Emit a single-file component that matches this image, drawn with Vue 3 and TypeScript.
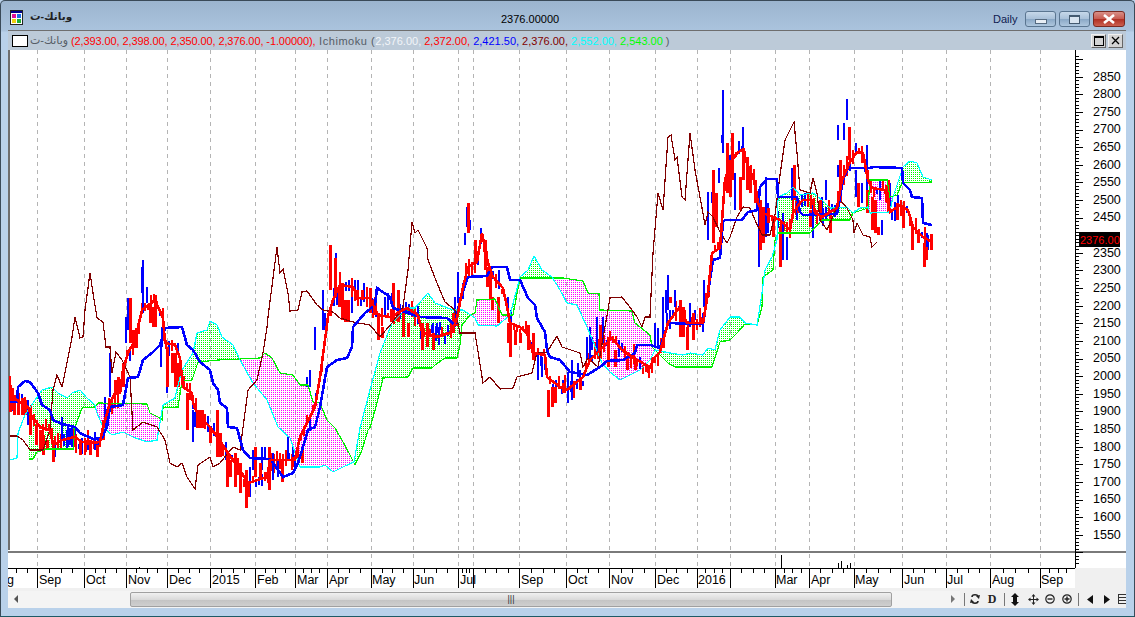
<script setup lang="ts">
type P = number[]
const pts = (a: P[]) => a.map((p) => p.join(',')).join(' ')

const chikou: P[] = [[10,436],[17,436],[23,440],[30,450],[38,450],[43,450],[50,430],[53,390],[57,375],[62,387],[67,363],[72,337],[75,317],[80,338],[83,337],[85,310],[90,273],[93,293],[97,318],[103,322],[106,347],[110,347],[112,373],[116,352],[122,360],[130,377],[133,430],[143,422],[157,427],[165,440],[170,463],[177,467],[182,463],[187,477],[195,489],[198,465],[210,457],[213,467],[220,463],[233,447],[240,450],[248,390],[257,380],[263,353],[267,327],[268,317],[277,247],[280,273],[283,269],[288,293],[290,311],[298,310],[302,292],[307,291],[317,305],[323,310],[333,312],[340,318],[353,322],[370,325],[380,337],[392,323],[403,307],[408,270],[412,222],[415,233],[418,230],[427,248],[428,260],[437,283],[445,302],[455,310],[460,333],[475,333],[483,383],[490,377],[500,389],[513,388],[517,377],[532,373],[537,353],[547,352],[557,336],[562,347],[580,353],[583,367],[588,358],[598,367],[610,298],[622,297],[632,310],[637,317],[642,327],[645,317],[650,317],[653,253],[658,193],[663,210],[668,137],[671,135],[675,160],[677,157],[682,197],[685,200],[690,133],[695,170],[702,208],[705,225],[708,212],[713,217],[720,232],[727,243],[730,237],[737,217],[743,207],[750,208],[755,220],[762,235],[770,235],[775,215],[780,175],[785,140],[790,130],[794,122],[797,153],[800,190],[810,193],[813,178],[817,193],[820,220],[827,230],[840,200],[847,208],[853,220],[854,233],[857,223],[863,235],[870,237],[872,247],[877,242]]

const senkouA: P[] = [[10,460],[17,458],[18,433],[25,415],[33,403],[42,390],[52,387],[58,393],[67,398],[72,393],[80,390],[87,398],[95,405],[97,413],[103,427],[112,435],[123,432],[133,437],[147,442],[157,440],[163,405],[175,398],[182,370],[193,353],[197,333],[207,330],[210,321],[217,325],[222,337],[233,345],[240,360],[253,383],[267,400],[278,427],[290,438],[300,467],[320,467],[325,465],[333,472],[345,466],[354,462],[360,428],[370,390],[380,353],[392,323],[407,308],[415,308],[428,293],[435,303],[453,310],[463,310],[475,318],[478,325],[497,326],[510,315],[520,277],[528,270],[534,256],[542,270],[552,277],[560,290],[567,303],[577,305],[587,327],[602,363],[610,372],[620,380],[640,370],[650,360],[655,350],[670,353],[683,355],[690,353],[703,355],[708,348],[715,350],[720,330],[730,317],[740,317],[745,323],[757,325],[762,293],[765,270],[772,257],[777,240],[778,197],[787,193],[793,187],[800,195],[813,193],[822,200],[830,208],[847,207],[853,213],[860,208],[868,207],[870,213],[890,212],[893,197],[903,167],[910,161],[917,163],[923,177],[932,180]]

const senkouB: P[] = [[29,459],[33,459],[37,452],[47,449],[73,449],[75,427],[82,408],[95,407],[98,403],[147,404],[150,413],[158,417],[162,420],[163,408],[178,407],[182,381],[192,380],[198,362],[218,360],[260,358],[265,353],[272,358],[280,373],[293,375],[300,385],[308,385],[313,402],[320,403],[327,420],[335,428],[342,440],[350,455],[355,465],[362,450],[368,430],[370,428],[377,403],[383,378],[408,377],[413,368],[432,368],[435,365],[445,358],[457,358],[460,345],[462,325],[470,315],[475,313],[477,300],[495,299],[502,315],[513,315],[520,278],[563,278],[583,281],[588,293],[599,294],[600,310],[632,311],[635,323],[650,335],[652,347],[668,363],[675,367],[712,367],[720,342],[730,340],[737,333],[745,324],[757,325],[762,307],[763,277],[773,270],[775,240],[778,233],[810,233],[822,220],[850,220],[853,213],[868,208],[870,180],[887,180],[890,197],[897,195],[902,183],[932,182]]

const kijun: P[] = [[10,402],[17,402],[18,387],[25,381],[30,382],[38,393],[42,405],[50,410],[53,420],[62,424],[75,427],[80,433],[93,439],[102,438],[107,427],[110,407],[123,405],[128,378],[138,377],[143,360],[153,352],[160,345],[165,328],[182,327],[187,345],[193,350],[200,362],[210,370],[213,383],[218,390],[220,403],[227,408],[228,427],[237,428],[243,450],[250,458],[270,459],[273,463],[283,477],[293,473],[298,463],[303,447],[308,430],[315,427],[320,407],[327,367],[337,360],[347,358],[352,347],[353,327],[365,313],[375,305],[377,288],[390,297],[393,308],[420,317],[447,318],[455,325],[460,300],[468,277],[487,276],[492,267],[507,267],[510,280],[520,280],[528,298],[535,305],[537,318],[545,332],[547,350],[550,357],[560,360],[570,372],[587,375],[600,367],[607,361],[623,360],[635,353],[637,345],[650,345],[660,348],[668,323],[703,324],[708,293],[713,260],[720,258],[723,222],[725,220],[742,220],[748,212],[758,210],[760,187],[767,179],[777,179],[778,197],[797,197],[800,212],[803,215],[837,214],[843,180],[848,168],[870,168],[873,167],[902,168],[903,183],[910,190],[912,197],[922,198],[923,223],[932,225]]

const tenkan: P[] = [[10,385],[13,397],[20,402],[28,407],[32,417],[40,427],[50,430],[53,445],[62,440],[75,437],[82,442],[90,443],[100,442],[103,427],[110,403],[115,393],[120,393],[123,370],[128,353],[135,340],[142,310],[155,300],[163,318],[165,343],[175,345],[180,358],[183,387],[192,393],[193,403],[198,415],[210,427],[218,438],[228,453],[238,467],[248,483],[267,477],[270,460],[295,460],[300,437],[315,407],[320,377],[325,340],[328,317],[333,300],[340,285],[353,287],[358,298],[370,298],[378,315],[390,317],[407,308],[418,315],[422,332],[437,337],[452,332],[457,318],[463,287],[468,267],[477,262],[482,233],[488,263],[493,277],[503,288],[507,307],[510,323],[520,327],[527,333],[533,353],[545,355],[547,377],[560,387],[567,390],[583,377],[590,360],[603,347],[612,338],[622,350],[637,360],[650,367],[655,357],[660,352],[668,323],[680,307],[687,323],[703,323],[708,293],[712,253],[720,248],[725,180],[731,162],[737,153],[742,150],[747,163],[755,183],[758,203],[763,213],[773,217],[780,220],[790,230],[793,213],[800,203],[803,200],[813,200],[815,213],[822,217],[837,208],[842,180],[850,162],[857,152],[863,153],[868,180],[872,188],[885,190],[890,212],[900,205],[908,210],[913,227],[923,237],[932,242]]

const redBars: P[] = [[10,385,412],[12,388,410],[14,395,415],[18,400,415],[22,398,415],[25,400,415],[30,415,435],[36,425,445],[40,430,450],[43,435,455],[47,440,450],[53,440,462],[75,435,447],[80,440,455],[85,440,452],[90,440,455],[97,445,457],[103,420,440],[115,380,395],[118,377,393],[123,363,387],[130,298,343],[133,330,348],[136,333,348],[150,303,323],[153,307,327],[155,295,327],[167,347,387],[172,353,373],[175,353,387],[178,363,387],[187,393,430],[197,410,428],[200,410,428],[202,410,428],[210,427,443],[217,410,457],[220,433,457],[227,453,487],[230,460,477],[235,453,487],[240,463,493],[246,470,508],[248,483,497],[255,447,477],[260,463,480],[269,447,490],[282,460,482],[292,457,467],[302,450,463],[330,245,290],[335,258,297],[339,290,307],[342,283,320],[345,300,322],[348,300,322],[357,290,300],[362,290,300],[370,288,313],[375,297,315],[378,313,340],[382,327,338],[393,283,323],[398,290,322],[403,313,337],[408,323,337],[422,323,350],[427,323,347],[433,333,350],[453,313,327],[468,203,233],[475,240,257],[485,240,270],[487,267,287],[490,273,300],[492,297,310],[498,297,323],[508,323,343],[510,323,357],[515,330,345],[520,333,343],[528,325,350],[533,333,360],[548,390,417],[552,387,407],[555,387,403],[563,383,393],[580,380,390],[600,325,355],[608,337,367],[615,350,367],[627,357,370],[635,360,370],[648,367,373],[670,297,303],[680,300,337],[683,307,337],[687,327,350],[693,313,340],[700,317,323],[713,170,243],[716,193,227],[727,143,193],[730,160,197],[732,133,180],[740,177,210],[743,148,180],[747,157,190],[750,167,193],[755,180,203],[760,200,250],[763,207,243],[768,208,223],[773,217,237],[780,227,267],[794,165,200],[798,200,213],[810,210,227],[820,200,220],[830,210,233],[840,160,203],[849,127,160],[858,183,207],[867,190,213],[872,197,230],[875,200,233],[878,227,235],[888,180,213],[897,203,220],[903,207,228],[912,227,250],[918,233,243],[924,243,267],[926,247,260],[931,234,250]]

const blueBars: P[] = [[18,395,415],[28,400,425],[55,443,457],[62,417,440],[68,427,447],[72,427,447],[75,430,443],[88,445,450],[95,432,450],[98,440,453],[105,397,430],[110,353,397],[126,317,343],[128,298,330],[142,267,293],[143,260,313],[147,287,303],[161,345,367],[162,327,347],[167,353,393],[188,410,430],[193,410,442],[195,412,427],[226,442,460],[250,467,497],[253,450,470],[262,447,470],[265,447,460],[273,453,480],[278,460,477],[288,437,460],[293,447,463],[307,377,387],[310,370,387],[315,327,350],[323,290,330],[325,313,330],[336,253,290],[352,297,313],[355,280,293],[358,280,290],[372,298,313],[385,297,317],[388,293,310],[392,293,303],[432,325,333],[437,323,333],[440,322,330],[455,297,327],[458,272,303],[467,207,227],[470,220,230],[465,233,245],[538,353,380],[542,357,377],[545,363,370],[563,380,390],[568,372,403],[572,360,400],[578,363,377],[587,337,360],[590,327,360],[592,337,350],[597,317,353],[603,317,343],[655,323,347],[658,328,347],[663,297,340],[666,290,313],[668,275,310],[675,290,307],[690,303,327],[695,310,320],[704,280,307],[708,192,240],[712,192,203],[719,168,183],[722,135,143],[723,90,153],[735,173,210],[740,195,200],[743,127,163],[759,190,267],[766,177,237],[768,203,233],[783,213,260],[787,237,260],[792,168,200],[797,203,220],[813,203,238],[822,197,220],[826,180,200],[838,125,140],[838,165,177],[844,123,140],[847,99,120],[856,170,197],[862,183,203],[867,145,213],[882,220,235],[890,183,210],[927,233,260]]

const interp = (s: P[], x: number): number | null => {
  if (x < s[0][0] || x > s[s.length - 1][0]) return null
  for (let i = 1; i < s.length; i++) {
    if (x <= s[i][0]) {
      const [x0, y0] = s[i - 1]
      const [x1, y1] = s[i]
      return x1 === x0 ? y1 : y0 + ((y1 - y0) * (x - x0)) / (x1 - x0)
    }
  }
  return null
}

let seed = 20160
const rnd = () => {
  seed = (seed * 1103515 + 12345) % 2147483
  return seed / 2147483
}
let noiseRed = ''
let noiseBlue = ''
for (let x = 10; x <= 932; x += 3) {
  const c = interp(tenkan, x)
  if (c === null) continue
  const mid = c + (rnd() - 0.45) * 12
  const half = 2 + rnd() * 8
  const seg = `M${x} ${Math.round(mid - half)}V${Math.round(mid + half)}`
  if (rnd() < 0.3) noiseBlue += seg
  else noiseRed += seg
}
const barPath = (a: P[]) => a.map((b) => `M${b[0]} ${b[1]}V${b[2]}`).join('')
const redPath = barPath(redBars)
const bluePath = barPath(blueBars)

let up = ''
let down = ''
for (let x = 29; x <= 932; x += 2) {
  const a = interp(senkouA, x)
  const b = interp(senkouB, x)
  if (a === null || b === null) continue
  const t = Math.ceil(Math.min(a, b) / 2) * 2
  const h = Math.max(a, b)
  let seg = ''
  for (let y = t; y < h; y += 2) seg += `M${x} ${y}h1v1h-1z`
  if (a < b) up += seg
  else down += seg
}

const grid = [37, 84, 126, 167, 210, 255, 295, 327, 371, 413, 458, 473, 519, 566, 609, 655, 697, 730, 775, 809, 854, 902, 946, 990, 1040]
const gridPath = grid.map((x) => `M${x + 0.5} 50V568`).join('')
const majorPath = grid.map((x) => `M${x + 0.5} 568V588`).join('')
let minorPath = ''
const allX = [-5, ...grid, 1075]
for (let i = 1; i < allX.length; i++) {
  const w = allX[i] - allX[i - 1]
  for (let k = 1; k < 4; k++) {
    const x = Math.round(allX[i - 1] + (w * k) / 4)
    if (x > 9 && x < 1075) minorPath += `M${x + 0.5} 568v5`
  }
}
const months = [
  { x: 39, t: 'Sep' }, { x: 86, t: 'Oct' }, { x: 128, t: 'Nov' }, { x: 169, t: 'Dec' },
  { x: 212, t: '2015' }, { x: 257, t: 'Feb' }, { x: 297, t: 'Mar' }, { x: 329, t: 'Apr' },
  { x: 372, t: 'May' }, { x: 414, t: 'Jun' }, { x: 460, t: 'Jul' }, { x: 521, t: 'Sep' },
  { x: 568, t: 'Oct' }, { x: 611, t: 'Nov' }, { x: 657, t: 'Dec' }, { x: 698, t: '2016' },
  { x: 776, t: 'Mar' }, { x: 811, t: 'Apr' }, { x: 855, t: 'May' }, { x: 904, t: 'Jun' },
  { x: 947, t: 'Jul' }, { x: 992, t: 'Aug' }, { x: 1041, t: 'Sep' },
]
const prices: { y: number; t: string }[] = []
for (let p = 2850, i = 0; p >= 1550; p -= 50, i++) {
  if (p !== 2400) prices.push({ y: 76 + i * 17.62, t: String(p) })
}
let axisTicks = ''
for (let y = 55.5; y < 566; y += 3.524) {
  const long = Math.abs((y - 76 + 17.62 * 40) % 17.62) < 1.5
  axisTicks += `M1075 ${Math.round(y) + 0.5}h${long ? 8 : 4}`
}
</script>

<template>
  <div class="win">
    <div class="title">
      <svg class="app" width="13" height="15" viewBox="0 0 13 15">
        <rect x="0.5" y="0.5" width="12" height="14" fill="#fff" stroke="#222" />
        <rect x="1" y="1" width="11" height="2" fill="#00008b" />
        <rect x="2" y="4" width="4" height="4" fill="#e0109a" />
        <rect x="7" y="4" width="4" height="4" fill="#1a6ce8" />
        <rect x="2" y="9" width="4" height="4" fill="#f0d010" />
        <rect x="7" y="9" width="4" height="4" fill="#20b030" />
      </svg>
      <span class="name" dir="rtl">وبانك-ت</span>
      <span class="center">2376.00000</span>
      <span class="daily">Daily</span>
      <div class="btns">
        <div class="btn"><i class="dash"></i></div>
        <div class="btn"><i class="box"></i></div>
        <div class="btn close">
          <svg width="14" height="10" viewBox="0 0 14 10"><path d="M2 1l10 8M12 1L2 9" stroke="#fff" stroke-width="2.6" /></svg>
        </div>
      </div>
    </div>
    <div class="client">
      <div class="head">
        <span class="swatch"></span>
        <span class="gr" dir="rtl">وبانك-ت</span>
        <span class="r tight">&nbsp;(2,393.00, 2,398.00, 2,350.00, 2,376.00, -1.00000),</span>
        <span class="gr wide">&nbsp;Ichimoku (</span><span class="w">2,376.00,</span>
        <span class="r">&nbsp;2,372.00,</span>
        <span class="b">&nbsp;2,421.50,</span>
        <span class="m">&nbsp;2,376.00,</span>
        <span class="c">&nbsp;2,552.00,</span>
        <span class="g">&nbsp;2,543.00</span>
        <span class="gr">&nbsp;)</span>
        <span class="spring"></span>
        <span class="mini"><i></i></span>
        <span class="mini x">
          <svg width="9" height="9" viewBox="0 0 9 9"><path d="M1 1l7 7M8 1L1 8" stroke="#000" stroke-width="1.3" /></svg>
        </span>
      </div>
      <svg class="plot" width="1118" height="540" viewBox="8 50 1118 540" shape-rendering="crispEdges">
        <rect x="8" y="50" width="1118" height="540" fill="#fff" />
        <rect x="1075" y="568" width="51" height="22" fill="#f0f0f0" />
        <rect x="8" y="588" width="1068" height="2" fill="#f0f0f0" />
        <rect x="8" y="50" width="2" height="500" fill="#6e6e6e" />
        <path :d="gridPath" stroke="#b4b4b4" stroke-dasharray="4 4" fill="none" />
        <path :d="up" fill="#00ff00" />
        <path :d="down" fill="#ff00ff" />
        <path :d="noiseBlue" stroke="#0000ff" stroke-width="2" fill="none" />
        <path :d="noiseRed" stroke="#ff0000" stroke-width="2" fill="none" />
        <path :d="bluePath" stroke="#0000ff" stroke-width="2" fill="none" />
        <path :d="redPath" stroke="#ff0000" stroke-width="3" fill="none" />
        <polyline :points="pts(senkouB)" fill="none" stroke="#00ee00" stroke-width="1.2" />
        <polyline :points="pts(senkouA)" fill="none" stroke="#00ffff" stroke-width="1.2" />
        <polyline :points="pts(chikou)" fill="none" stroke="#800000" stroke-width="1.2" />
        <polyline :points="pts(kijun)" fill="none" stroke="#0000ff" stroke-width="2.6" />
        <polyline :points="pts(tenkan)" fill="none" stroke="#ff0000" stroke-width="2.6" />

        <rect x="8" y="551" width="1118" height="2" fill="#7a7a7a" />
        <path d="M781.500 555v13M838.500 563v5M841.500 561v7M847.500 565v3M850.500 563v5M139.500 567v1" stroke="#000" />
        <path d="M8 568.500H1075M1075.500 50V568" stroke="#000" fill="none" />
        <path :d="axisTicks" stroke="#000" fill="none" />
        <path :d="majorPath" stroke="#000" fill="none" />
        <path :d="minorPath" stroke="#000" fill="none" />
        <g shape-rendering="auto" class="lab">
          <text v-for="p in prices" :key="p.t" x="1093" :y="p.y + 4.5">{{ p.t }}</text>
          <text v-for="m in months" :key="m.x + m.t" :x="m.x" y="584">{{ m.t }}</text>
          <text x="7" y="584">g</text>
        </g>
        <rect x="1079" y="232" width="41" height="15" fill="#000" />
        <text x="1080" y="244" class="tag" shape-rendering="auto">2376.00</text>
      </svg>
      <div class="scroll">
        <div class="track">
          <span class="tri left"></span>
          <div class="thumb"><span class="grip">|||</span></div>
          <span class="tri right"></span>
        </div>
        <div class="tools">
          <span class="sep first"></span>
          <span class="slot s20">
            <svg width="10" height="12" viewBox="0 0 10 12">
              <path d="M2 4C2 1 8 1 8 4M8 8C8 11 2 11 2 8" stroke="#222" stroke-width="1.6" fill="none" />
              <path d="M6 3l3 3 1-4zM4 9L1 6 0 10z" fill="#222" />
            </svg>
          </span>
          <span class="slot s14 letter">D</span>
          <span class="sep mid"></span>
          <span class="slot s20">
            <svg width="8" height="13" viewBox="0 0 8 13">
              <path d="M4 0l4 4H0zM4 13l4-4H0z" fill="#111" /><rect x="2" y="4" width="4" height="5" fill="#111" />
            </svg>
          </span>
          <span class="slot s16">
            <svg width="11" height="11" viewBox="0 0 11 11">
              <path d="M5.500 1v9M1 5.500h9" stroke="#222" />
              <path d="M5.500 0l2 2.500h-4zM5.500 11l2-2.500h-4zM0 5.500l2.500-2v4zM11 5.500l-2.500-2v4z" fill="#222" />
            </svg>
          </span>
          <span class="slot s18">
            <svg width="10" height="10" viewBox="0 0 10 10">
              <circle cx="5" cy="5" r="4.200" fill="none" stroke="#222" stroke-width="1.200" /><path d="M2.500 5h5" stroke="#222" stroke-width="1.400" />
            </svg>
          </span>
          <span class="slot s16">
            <svg width="10" height="10" viewBox="0 0 10 10">
              <circle cx="5" cy="5" r="4.200" fill="none" stroke="#222" stroke-width="1.200" /><path d="M2.500 5h5M5 2.500v5" stroke="#222" stroke-width="1.400" />
            </svg>
          </span>
          <span class="sep thin"></span>
          <span class="slot s22"><svg width="6" height="9" viewBox="0 0 6 9"><path d="M0 4.500L6 0v9z" fill="#111" /></svg></span>
          <span class="slot s12"><svg width="6" height="9" viewBox="0 0 6 9"><path d="M6 4.500L0 0v9z" fill="#111" /></svg></span>
          <span class="slot menu">
            <svg width="8" height="10" viewBox="0 0 8 10">
              <path d="M0 .5h8M0 3.500h8M0 6.500h8M0 9.500h8M.5 0v10" stroke="#333" fill="none" />
            </svg>
          </span>
        </div>
      </div>
    </div>
  </div>
</template>

<style scoped>
.win {
  width: 1135px;
  height: 617px;
  box-sizing: border-box;
  border: 1px solid #3a4a58;
  border-bottom-color: #1e5a66;
  border-radius: 5px 5px 0 0;
  background: linear-gradient(#9cb5cf 0, #abc4de 30px, #b9d1ea 31px);
  font-family: "Liberation Sans", "DejaVu Sans", sans-serif;
  font-size: 11px;
  overflow: hidden;
  display: flex;
  flex-direction: column;
}
.title {
  height: 29px;
  flex: none;
  display: flex;
  align-items: flex-start;
  position: relative;
  padding: 9px 9px 0 9px;
  box-sizing: border-box;
  color: #000;
}
.app { flex: none; }
.name { margin-left: 7px; font-size: 10.5px; font-weight: 700; color: #222; }
.center { position: absolute; left: 500px; top: 12px; }
.daily { position: absolute; left: 992px; top: 12px; color: #102050; }
.btns { margin-left: auto; display: flex; gap: 3px; margin-top: 1px; }
.btn {
  width: 31px;
  height: 16px;
  box-sizing: border-box;
  border: 1px solid #5a7590;
  border-radius: 3px;
  background: linear-gradient(#c6d8ea, #a8c0d8 50%, #8aa8c6 52%, #aec6de);
  display: flex;
  align-items: center;
  justify-content: center;
}
.close {
  width: 32px;
  border-color: #7a2a22;
  background: linear-gradient(#d89088, #c85a50 50%, #b03024 52%, #cc6050);
}
.dash { width: 10px; height: 3px; margin-top: 4px; background: #e8eef5; border: 1px solid #556a80; }
.box { width: 9px; height: 6px; border: 1px solid #445a70; border-top-width: 2px; background: #d8e4f0; }
.client {
  margin: 0 8px 0 7px;
  width: 1118px;
  flex: none;
  background: #f0f0f0;
}
.head {
  height: 20px;
  box-sizing: border-box;
  border-top: 1px solid #6e6e6e;
  background: #bccad8;
  display: flex;
  align-items: center;
  padding: 0 3px 0 4px;
  white-space: pre;
}
.swatch { width: 14px; height: 10px; border: 1px solid #000; background: #fff; margin-right: 2px; flex: none; }
.gr { color: #555c66; }
.tight { letter-spacing: -0.1px; }
.wide { letter-spacing: 0.55px; }
.r { color: #ff0000; }
.w { color: #f2f5f8; }
.b { color: #0000ff; }
.m { color: #800000; }
.c { color: #00ffff; }
.g { color: #00ff00; }
.spring { flex: 1; }
.mini {
  width: 15px;
  height: 14px;
  box-sizing: border-box;
  background: #d4d4d4;
  border: 1px solid;
  border-color: #f0f0f0 #666 #666 #f0f0f0;
  display: flex;
  align-items: center;
  justify-content: center;
  margin-left: 2px;
}
.mini i { width: 8px; height: 7px; border: 1px solid #000; border-top-width: 2px; }
.plot { display: block; }
.lab text { font-size: 12.5px; fill: #000; font-family: "Liberation Sans", sans-serif; }
.tag { font-size: 11px; fill: #ff0000; font-family: "Liberation Sans", sans-serif; }
.scroll {
  height: 18px;
  display: flex;
  align-items: center;
  background: #f0f0f0;
}
.track {
  width: 952px;
  height: 17px;
  display: flex;
  align-items: center;
  flex: none;
  background: #f4f4f4;
}
.tri { width: 0; height: 0; border: 4px solid transparent; flex: none; }
.tri.left { border-right: 4px solid #555; margin-left: 2px; }
.tri.right { border-left: 4px solid #777; margin-left: 59px; }
.thumb {
  width: 762px;
  height: 15px;
  margin-left: 112px;
  box-sizing: border-box;
  border: 1px solid #a0a0a0;
  border-radius: 2px;
  background: linear-gradient(#f0f0f0, #dadada 50%, #c4c4c4 55%, #cfcfcf);
  text-align: center;
  font-size: 9px;
  line-height: 13px;
  color: #333;
  flex: none;
}
.tools { display: flex; align-items: center; flex: 1; }
.sep { width: 1px; height: 13px; background: #777; flex: none; }
.sep.first { margin-left: 4px; }
.sep.mid { margin-left: 5px; }
.sep.thin { margin-left: 3px; }
.slot { display: flex; justify-content: center; align-items: center; flex: none; height: 14px; }
.s12 { width: 12px; }
.s14 { width: 14px; }
.s16 { width: 16px; }
.s18 { width: 18px; }
.s20 { width: 20px; }
.s22 { width: 22px; }
.menu { margin-left: 5px; width: 8px; overflow: hidden; }
.letter { font: 700 12px "Liberation Serif", serif; color: #222; }
</style>
<style>
html, body { margin: 0; padding: 0; background: #b9d1ea; }
</style>
